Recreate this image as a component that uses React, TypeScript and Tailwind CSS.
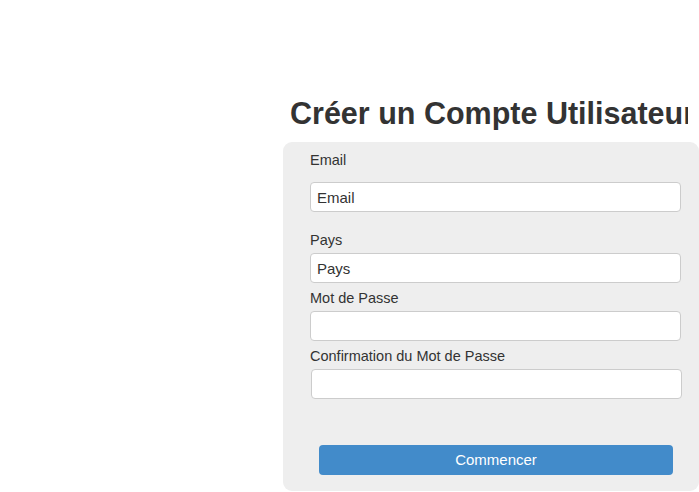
import React from "react";

const font = { fontFamily: '"Liberation Sans", Arial, sans-serif' };

const inputCls =
  "h-[30px] w-[371px] rounded-[4px] border border-[#cccccc] bg-white px-[6px] text-[15px] text-[#333] outline-none";

function Label({ text, shift }: { text: string; shift?: boolean }) {
  return (
    <label className={`${shift ? "ml-[28px]" : "ml-[27px]"} block h-5 text-[14.5px] leading-5 text-[#333]`}>
      {text}
    </label>
  );
}

export default function App() {
  return (
    <div className="h-[492px] w-[699px] overflow-hidden bg-white text-[#333]" style={font}>
      <div className="pl-[283px] pt-[96px]">
        <h1 className="ml-[7px] h-[34px] w-[398px] overflow-hidden whitespace-nowrap text-[30.5px] font-bold leading-[34px] text-[#333]">
          Créer un Compte Utilisateur
        </h1>
        <form className="mt-[12px] flex w-[416px] flex-col rounded-[9px] bg-[#eeeeee] pt-[8px] pb-[16px]">
          <Label text="Email" />
          <input className={`mt-[12px] ml-[27px] ${inputCls}`} defaultValue="Email" />

          <div className="mt-[18px]">
            <Label text="Pays" />
          </div>
          <input className={`mt-[3px] ml-[27px] ${inputCls}`} defaultValue="Pays" />

          <div className="mt-[5px]">
            <Label text="Mot de Passe" />
          </div>
          <input type="password" className={`mt-[3px] ml-[27px] ${inputCls}`} />

          <div className="mt-[5px]">
            <Label text="Confirmation du Mot de Passe" />
          </div>
          <input type="password" className={`mt-[3px] ml-[28px] ${inputCls}`} />

          <button
            type="button"
            className="mt-[46px] ml-[36px] h-[30px] w-[354px] rounded-[4px] bg-[#428bca] text-[15px] text-white"
          >
            Commencer
          </button>
        </form>
      </div>
    </div>
  );
}
